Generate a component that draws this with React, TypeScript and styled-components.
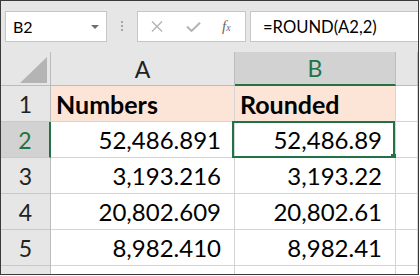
import styled, { createGlobalStyle } from 'styled-components';

const GlobalStyle = createGlobalStyle`
body {
  margin: 0;
  background: #ffffff;
  font-family: Lato, "Open Sans", sans-serif;
}
`;

const GREEN = '#217346';

const Frame = styled.div`
width: 419px;
height: 275px;
box-sizing: border-box;
border: 1px solid #3a3a3a;
overflow: hidden;
background: #ffffff;
`;

const Toolbar = styled.div`
display: flex;
align-items: flex-start;
height: 51px;
box-sizing: border-box;
padding: 10px 0 0 4px;
background: #e6e6e6;
`;

const NameBox = styled.div`
display: flex;
align-items: center;
justify-content: space-between;
width: 102px;
height: 31px;
box-sizing: border-box;
padding: 0 7px 0 7px;
background: #ffffff;
border: 1px solid #c6c6c6;
font-size: 16px;
color: #000000;
`;

const Caret = styled.span`
width: 0;
height: 0;
border-left: 4px solid transparent;
border-right: 4px solid transparent;
border-top: 4px solid #6e6e6e;
margin-top: 1px;
`;

const Dots = styled.div`
display: flex;
flex-direction: column;
gap: 2px;
margin: 10px 14px 0 14px;
span {
  width: 2px;
  height: 2px;
  background: #a6a6a6;
}
`;

const ButtonBox = styled.div`
display: flex;
align-items: center;
width: 109px;
height: 31px;
box-sizing: border-box;
padding: 0 0 0 13px;
gap: 23px;
background: #ffffff;
border: 1px solid #c6c6c6;
`;

const Fx = styled.span`
font-family: "Liberation Serif", serif;
font-style: italic;
font-size: 15px;
color: #6a6a6a;
margin-left: -2px;
sub {
  font-size: 10px;
  vertical-align: 0;
}
`;

const FormulaInput = styled.div`
flex: 1;
display: flex;
align-items: center;
height: 31px;
box-sizing: border-box;
margin: 0 -1px 0 4px;
padding-left: 12px;
background: #ffffff;
border: 1px solid #c6c6c6;
font-size: 16.6px;
color: #000000;
`;

const Sheet = styled.div`
display: grid;
grid-template-columns: 50px 184px 161px 1fr;
grid-template-rows: 34px repeat(6, 36px);
`;

const Corner = styled.div`
display: flex;
align-items: flex-end;
justify-content: flex-end;
padding: 0 3px 2px 0;
background: #e6e6e6;
border-right: 1px solid #bcbcbc;
border-bottom: 1px solid #bcbcbc;
`;

const ColHead = styled.div<{ $active?: boolean }>`
display: flex;
align-items: center;
justify-content: center;
font-size: 23px;
color: ${p => (p.$active ? GREEN : '#222222')};
background: ${p => (p.$active ? '#d2d2d2' : '#e6e6e6')};
border-right: 1px solid #bcbcbc;
border-bottom: ${p => (p.$active ? `2px solid ${GREEN}` : '1px solid #bcbcbc')};
`;

const RowHead = styled.div<{ $active?: boolean }>`
display: flex;
align-items: center;
justify-content: center;
font-size: 23px;
color: ${p => (p.$active ? GREEN : '#222222')};
background: ${p => (p.$active ? '#d2d2d2' : '#e6e6e6')};
border-right: ${p => (p.$active ? `2px solid ${GREEN}` : '1px solid #bcbcbc')};
border-bottom: 1px solid #c8c8c8;
`;

const Cell = styled.div<{ $head?: boolean }>`
position: relative;
display: flex;
align-items: center;
justify-content: ${p => (p.$head ? 'flex-start' : 'flex-end')};
padding: ${p => (p.$head ? '0 0 0 5px' : '0 13px 0 0')};
font-size: ${p => (p.$head ? '25px' : '24px')};
font-weight: ${p => (p.$head ? 700 : 400)};
color: #000000;
background: ${p => (p.$head ? '#fce4d6' : '#ffffff')};
border-right: 1px solid #d4d4d4;
border-bottom: 1px solid #d4d4d4;
`;

const Selection = styled.div`
position: absolute;
top: -1px;
left: -3px;
right: 0;
bottom: -1px;
border: 2px solid ${GREEN};
pointer-events: none;
`;

const FillHandle = styled.span`
position: absolute;
right: -3px;
bottom: -3px;
width: 5px;
height: 5px;
background: ${GREEN};
`;

const ROWS = [
  { a: '52,486.891', b: '52,486.89' },
  { a: '3,193.216', b: '3,193.22' },
  { a: '20,802.609', b: '20,802.61' },
  { a: '8,982.410', b: '8,982.41' },
];

function App() {
  return (
    <>
      <GlobalStyle />
      <Frame>
        <Toolbar>
          <NameBox>
            <span>B2</span>
            <Caret />
          </NameBox>
          <Dots>
            <span />
            <span />
            <span />
          </Dots>
          <ButtonBox>
            <svg width="12" height="11" viewBox="0 0 12 11">
              <path d="M1 0.5 L11 10.5 M11 0.5 L1 10.5" stroke="#b4b4b4" strokeWidth="1.4" fill="none" />
            </svg>
            <svg width="15" height="10" viewBox="0 0 15 10">
              <path d="M1 4.5 L5.5 9 L14 0.8" stroke="#b4b4b4" strokeWidth="2" fill="none" />
            </svg>
            <Fx>f<sub>x</sub></Fx>
          </ButtonBox>
          <FormulaInput>=ROUND(A2,2)</FormulaInput>
        </Toolbar>
        <Sheet>
          <Corner>
            <svg width="27" height="26" viewBox="0 0 27 26">
              <polygon points="27,0 27,26 0,26" fill="#b4b4b4" />
            </svg>
          </Corner>
          <ColHead>A</ColHead>
          <ColHead $active>B</ColHead>
          <ColHead />

          <RowHead>1</RowHead>
          <Cell $head>Numbers</Cell>
          <Cell $head>Rounded</Cell>
          <Cell />

          {ROWS.map((r, i) => (
            <>
              <RowHead key={`h${i}`} $active={i === 0}>{i + 2}</RowHead>
              <Cell key={`a${i}`}>{r.a}</Cell>
              <Cell key={`b${i}`}>
                {r.b}
                {i === 0 && (
                  <Selection>
                    <FillHandle />
                  </Selection>
                )}
              </Cell>
              <Cell key={`c${i}`} />
            </>
          ))}

          <RowHead />
          <Cell />
          <Cell />
          <Cell />
        </Sheet>
      </Frame>
    </>
  );
}

export default App;
